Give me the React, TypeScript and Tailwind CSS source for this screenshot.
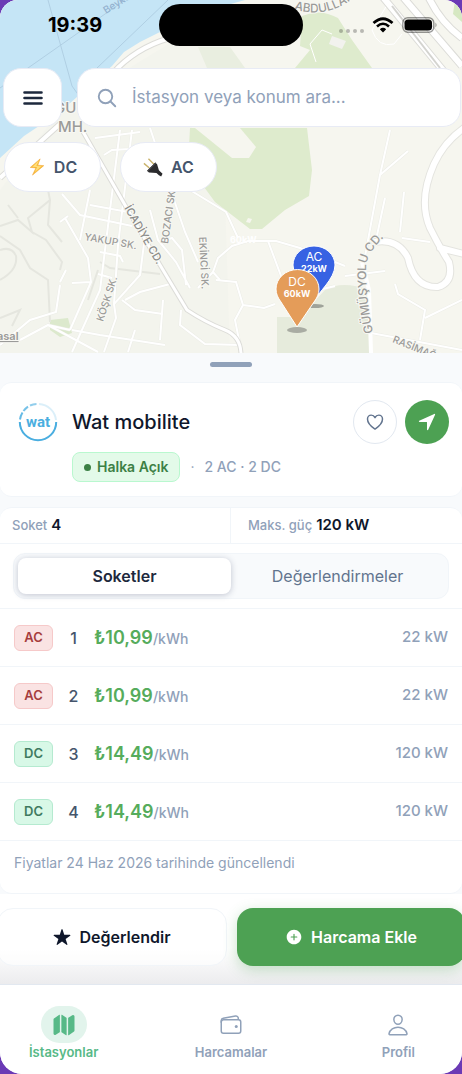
import { useState } from "react";
import type { ReactNode } from "react";
import {
  IoAddCircle,
  IoHeartOutline,
  IoMap,
  IoNavigate,
  IoPersonOutline,
  IoSearchOutline,
  IoStar,
  IoWalletOutline,
} from "react-icons/io5";

type Socket = { no: number; type: "AC" | "DC"; price: string; power: string };

const sockets: Socket[] = [
  { no: 1, type: "AC", price: "₺10,99", power: "22 kW" },
  { no: 2, type: "AC", price: "₺10,99", power: "22 kW" },
  { no: 3, type: "DC", price: "₺14,49", power: "120 kW" },
  { no: 4, type: "DC", price: "₺14,49", power: "120 kW" },
];

// small side streets, drawn as thin white lines
const streets = [
  "M62 194 L80 215 L132 226 M90 205 L128 212 M90 190 L80 240 M120 130 L100 290 L72 352",
  "M65 218 L88 258 L91 282 L70 330 M60 222 L68 216 M72 283 L91 282 M100 252 L120 256 L123 262",
  "M98 274 L112 278 M145 236 L140 275 L114 304 L116 318 L104 352 M122 300 L135 310 L163 314",
  "M132 130 L118 245 L114 304 M95 138 L140 132 M104 155 L112 150 L148 148 M172 194 L185 232 L198 262",
  "M150 210 L158 240 L176 262 L190 288 M160 242 L172 238 L182 250 L186 285 M198 288 L213 272 L220 280",
  "M213 272 L218 258 L232 246 L248 241 L276 241 L300 248 L345 266 M268 241 L290 300",
  "M216 280 L236 282 L243 305 L264 308 L275 304 M243 305 L235 320 L240 345",
  "M72 330 L100 335 L165 345 M48 325 L70 330 M20 340 L48 325 L98 352 M135 330 L128 352",
  "M60 282 L66 270 M60 285 L56 312 L30 320 L0 345 M125 300 L140 292 L170 284 M163 300 L160 340",
  "M181 310 L180 325 L205 344 L240 345 M380 175 L364 262 M390 130 L380 175 L408 151 M385 198 L376 240",
  "M404 192 L400 232 M402 238 L430 242 M395 284 L398 294 L425 310 L420 340 M425 318 L462 300",
  "M345 276 L385 271 M335 286 L310 292 M371 333 L462 350 M150 128 L172 194 M190 190 L226 212 L238 238",
];

const paths = [
  "M0 226 L18 220 L32 232 L28 218 L50 200 L48 190 M0 236 L20 250 L30 268 L48 280 L50 322",
  "M32 232 L46 240 L62 262 L60 270 M50 200 L48 225 L62 242 M8 205 L18 218 M0 280 Q18 270 16 256 Q12 246 0 250",
  "M0 318 L20 310 L12 326 M100 262 L110 268 L160 274 M98 270 L88 300",
];

function CityMap() {
  return (
    <svg
      className="absolute inset-0 h-full w-full"
      viewBox="0 0 462 353"
      preserveAspectRatio="xMidYMin slice"
      fontFamily="Inter, 'Noto Sans', sans-serif"
      aria-hidden="true"
    >
      <rect width="462" height="353" fill="#f6f6ef" />
      <path d="M60 110 L200 25 L240 60 L190 130 L225 200 L230 353 L0 353 L0 190 Z" fill="#f3f4ed" />
      <path d="M198 47 L230 47 L245 68 L207 68 Z" fill="#e9eee0" />
      <path d="M277 353 L277 317 L300 317 L325 290 Q342 280 369 290 L371 353 Z" fill="#e6ebdc" />
      <path d="M300 46 L302 16 Q320 8 338 18 L352 40 L372 68 L295 68 L310 50 Z" fill="#deebcd" />
      <path
        d="M190 128 L307 128 L312 170 L309 196 L285 210 L262 229 L250 229 L215 202 L188 165 Z"
        fill="#deebcd"
      />
      <path d="M195 128 L240 128 L256 147 L249 158 L232 158 Z" fill="#f6f6ef" />
      <path d="M50 320 L68 318 L72 333 L60 337 L50 330 Z" fill="#dce9cd" />
      <path d="M455 0 L462 0 L462 22 L453 14 Z" fill="#d6e8c2" />
      <path d="M248 218 L252 219 L250 223 L246 222 Z" fill="#f6f6ef" />
      <path d="M332 36 L346 41 L342 49 L329 44 Z" fill="#f2f2ee" />

      {/* sea and ferry lines */}
      <path
        d="M0 0 L245 0 L192 15 L168 28 L140 42 L124 52 L112 66 L60 112 L24 136 L0 158 Z"
        fill="#c5e5f6"
      />
      <g fill="none" stroke="#b0cfe3">
        <path d="M48 0 L72 86 L82 100" />
        <path d="M0 88 L28 68 L125 0" />
        <path d="M97 68 L168 0" />
      </g>

      <g fill="none" stroke="#e5e6df" strokeWidth="2">
        {paths.map((d) => (
          <path key={d} d={d} />
        ))}
      </g>
      <g fill="none" stroke="#ecede7" strokeWidth="3">
        {streets.map((d) => (
          <path key={d} d={d} />
        ))}
      </g>
      <g fill="none" stroke="#ffffff" strokeWidth="2">
        {streets.map((d) => (
          <path key={d} d={d} />
        ))}
        <path d="M316 62 L310 44 L322 30 L332 34 M390 0 L372 30 Q378 48 394 44 L402 34" strokeWidth="1" />
      </g>

      {/* main roads */}
      <g fill="none" stroke="#dcdcd8" strokeWidth="6">
        <path d="M0 178 L60 124 M112 74 Q135 48 170 38" />
        <path d="M82 130 L125 205 L160 265 L187 310 Q205 322 225 330 Q240 336 241 353" strokeWidth="5" />
        <path d="M382 -4 L446 74 M402 -4 L462 66 M428 -4 Q440 22 462 38" strokeWidth="8" />
      </g>
      <g fill="none" stroke="#ffffff" strokeWidth="4">
        <path d="M0 178 L60 124 M112 74 Q135 48 170 38" />
        <path d="M82 130 L125 205 L160 265 L187 310 Q205 322 225 330 Q240 336 241 353" strokeWidth="3" />
        <path d="M382 -4 L446 74 M402 -4 L462 66 M428 -4 Q440 22 462 38" strokeWidth="6" />
        <path d="M371 353 L369 290 L362 262" />
      </g>
      <path d="M392 6 L440 68" stroke="#d4d4d0" strokeWidth="2" />
      <g fill="none" strokeLinecap="round">
        <path
          d="M375 242 Q398 238 408 258 Q414 288 438 287 Q454 282 449 262 Q440 248 430 228 Q418 200 434 164 Q444 142 464 128 M440 248 L464 254"
          stroke="#e4e4df"
          strokeWidth="8"
        />
        <path
          d="M375 242 Q398 238 408 258 Q414 288 438 287 Q454 282 449 262 Q440 248 430 228 Q418 200 434 164 Q444 142 464 128 M440 248 L464 254"
          stroke="#ffffff"
          strokeWidth="6"
        />
      </g>

      <g fill="#9b9b99" stroke="#f8f8f3" strokeWidth="2" paintOrder="stroke" fontSize="10" fontWeight="500">
        <text transform="translate(106 14) rotate(-32)" fill="#93b1cf" stroke="none">Beykoz</text>
        <path id="abdullah" d="M294 9 Q334 22 366 -14" fill="none" stroke="none" />
        <text fontSize="12">
          <textPath href="#abdullah">ABDULLAH</textPath>
        </text>
        <text x="54" y="113" fontSize="15">GU</text>
        <text x="58" y="132" fontSize="15">MH.</text>
        <text transform="translate(124 208) rotate(60)" fontSize="11" fill="#8b8b89">İCADİYE CD.</text>
        <text transform="translate(84 240) rotate(10)">YAKUP SK.</text>
        <text transform="translate(168 244) rotate(-82)">BOZACI SK.</text>
        <text transform="translate(199 237) rotate(87)">EKİNCİ SK.</text>
        <text transform="translate(103 322) rotate(-72)">KÖŞK SK.</text>
        <path id="gumusyolu" d="M373 333 Q366 298 366 268 Q366 252 390 232" fill="none" stroke="none" />
        <text fontSize="12">
          <textPath href="#gumusyolu">GÜMÜŞYOLU CD.</textPath>
        </text>
        <text transform="translate(392 342) rotate(22)">RASİMAĞA</text>
        <text x="-3" y="340" fontSize="11" fontWeight="600" textDecoration="underline">asal</text>
        <text x="230" y="243" fill="#ffffff" stroke="none" fontSize="9" fontWeight="700">60kW</text>
      </g>

      {/* station pins */}
      <g fill="#ffffff" textAnchor="middle">
        <ellipse cx="315" cy="306" rx="9" ry="2" fill="#9fa39a" />
        <path
          d="M314 302 C310 292 293 279 293 265 A21 19 0 0 1 335 265 C335 279 318 292 314 302 Z"
          fill="#3762e3"
          stroke="#ffffff"
        />
        <text x="314" y="261" fontSize="12">AC</text>
        <text x="314" y="272" fontSize="9" fontWeight="700">22kW</text>
        <ellipse cx="297" cy="330" rx="10" ry="3" fill="#a9aca3" />
        <path
          d="M297 327 L281 302 C278 298 276 294 276 289 A21 19 0 0 1 319 289 C319 294 317 298 314 302 Z"
          fill="#e49c59"
          stroke="#ffffff"
        />
        <text x="297" y="286" fontSize="12">DC</text>
        <text x="297" y="297" fontSize="9" fontWeight="700">60kW</text>
      </g>
    </svg>
  );
}

function StatusBar() {
  return (
    <div className="relative flex h-[42px] items-center justify-between pl-12 pr-6">
      <span className="text-[20px] font-bold text-black">19:39</span>
      <div className="absolute left-1/2 top-0 h-[42px] w-36 -translate-x-1/2 rounded-full bg-black" />
      <div className="flex items-center gap-2">
        <div className="flex gap-[3px] pt-3">
          {[0, 1, 2, 3].map((dot) => (
            <span key={dot} className="size-1 rounded-full bg-black/25" />
          ))}
        </div>
        <svg className="h-4 w-[22px]" viewBox="0 0 22 16" aria-hidden="true">
          <path d="M1.5 6 Q11 -2.500 20.500 6" fill="none" stroke="#000" strokeWidth="2.8" />
          <path d="M5 9.500 Q11 4 17 9.500" fill="none" stroke="#000" strokeWidth="2.6" />
          <path d="M7.800 12.300 Q11 9.400 14.200 12.300 L11 15.600 Z" fill="#000" />
        </svg>
        <svg className="h-4 w-9" viewBox="0 0 36 16" aria-hidden="true">
          <rect x="0.800" y="0.800" width="31" height="14.400" rx="5" fill="none" stroke="#000" strokeOpacity="0.4" strokeWidth="1.400" />
          <rect x="2.500" y="2.500" width="27.500" height="11" rx="3.500" fill="#000" />
          <path d="M33.500 5.500 Q35.500 8 33.500 10.500 Z" fill="#000" opacity="0.45" />
        </svg>
      </div>
    </div>
  );
}

function MenuIcon() {
  return (
    <svg className="size-5" viewBox="0 0 20 20" aria-hidden="true">
      <path d="M1.500 4.500 H18.500 M1.500 10 H18.500 M1.500 15.500 H18.500" stroke="currentColor" strokeWidth="2.600" strokeLinecap="round" />
    </svg>
  );
}

function BoltIcon() {
  return (
    <svg className="size-[18px]" viewBox="0 0 20 20" aria-hidden="true">
      <path d="M13.500 1 L2.500 10.500 L8.800 11 L5 19 L17.500 8.500 L10.800 8 Z" fill="#fbbf3a" stroke="#f0a22e" strokeWidth="0.6" />
      <path d="M12 3 L5 9.600 L10.200 10 L7.600 15.500 L14.800 9.300 L9.200 9 Z" fill="#ffdf7c" />
    </svg>
  );
}

function PlugIcon() {
  return (
    <svg className="size-5" viewBox="0 0 22 22" aria-hidden="true">
      <path d="M1 7 L7 12 M6 2 L12 8" stroke="#c9b26a" strokeWidth="1.500" />
      <path d="M4.500 15 L13.500 6 L15.500 8 L17.500 14.500 L21.500 18.500 L20 21.500 L17.500 20 L14.800 17.500 L6.500 17 Z" fill="#2b2b2d" />
      <path d="M13.500 6 L4.500 15 L5.500 16 L14.500 7 Z" fill="#4a4a4d" />
    </svg>
  );
}

function WatLogo() {
  return (
    <svg className="size-10" viewBox="0 0 40 40" role="img" aria-label="wat">
      <g fill="none" stroke="#4aaee0" strokeWidth="2">
        <path d="M1.800 20 A18.200 18.200 0 0 0 38.200 20" />
        <path d="M2 17.500 A18 18 0 0 1 4.500 10.500" opacity="0.85" />
        <path d="M5.500 9 A18 18 0 0 1 10 4.600" opacity="0.75" />
        <path d="M12 3.500 A18 18 0 0 1 18.500 2" opacity="0.6" />
        <path d="M21 2 A18 18 0 0 1 38 18" opacity="0.2" />
      </g>
      <text
        x="20"
        y="25"
        textAnchor="middle"
        fontFamily="Roboto, sans-serif"
        fontSize="15"
        fontWeight="700"
        fill="#4aaee0"
      >
        wat
      </text>
    </svg>
  );
}

function FilterChip({ icon, label }: { icon: ReactNode; label: string }) {
  return (
    <button className="flex h-[50px] w-[97px] cursor-pointer items-center justify-center gap-2 rounded-full border border-[#e8ebf5] bg-white text-base font-semibold text-slate-600">
      {icon}
      {label}
    </button>
  );
}

function SocketRow({ socket }: { socket: Socket }) {
  const badge =
    socket.type === "AC"
      ? "border-[#f6c9c9] bg-[#fae3e3] text-[#a63d3d]"
      : "border-[#b5ead0] bg-[#d8f8e7] text-[#3f7a60]";

  return (
    <li className="flex h-[58px] items-center border-b border-slate-100 px-3.5">
      <span className={`flex h-[26px] w-[39px] items-center justify-center rounded-md border text-[13px] font-semibold ${badge}`}>
        {socket.type}
      </span>
      <span className="w-[41px] text-center text-base font-medium text-slate-600">{socket.no}</span>
      <span className="text-[18px] font-semibold text-[#56ac5c]">
        {socket.price}
        <span className="text-sm font-medium text-slate-400">/kWh</span>
      </span>
      <span className="ml-auto text-[15px] font-medium text-slate-400">{socket.power}</span>
    </li>
  );
}

const navItems = [
  { name: "İstasyonlar", icon: IoMap },
  { name: "Harcamalar", icon: IoWalletOutline },
  { name: "Profil", icon: IoPersonOutline },
];

export default function App() {
  const [tab, setTab] = useState("Soketler");
  const [page, setPage] = useState("İstasyonlar");

  return (
    <div className="min-h-screen bg-[#6b3ab5] font-['Inter','Liberation_Sans',sans-serif]">
      <div className="flex min-h-screen flex-col overflow-hidden rounded-t-[18px] rounded-b-[22px] bg-slate-50">
        <header className="relative pb-[161px] pt-1">
          <CityMap />
          <StatusBar />
          <div className="relative mt-[22px] flex gap-[15px] pl-[3px] pr-px">
            <button
              className="flex size-[59px] shrink-0 cursor-pointer items-center justify-center rounded-[18px] border border-[#e8ebf5] bg-white text-slate-800"
              aria-label="Menü"
            >
              <MenuIcon />
            </button>
            <label className="flex h-[59px] min-w-0 flex-1 items-center gap-3.5 rounded-[18px] border border-[#e8ebf5] bg-white pl-[18px]">
              <IoSearchOutline className="size-[22px] shrink-0 text-slate-400 [&_path]:[stroke-width:44px]" />
              <input
                type="text"
                aria-label="İstasyon ara"
                placeholder="İstasyon veya konum ara..."
                className="w-full min-w-0 bg-transparent text-[17px] text-slate-800 outline-none placeholder:text-slate-400"
              />
            </label>
          </div>
          <div className="relative mt-[15px] flex gap-[19px] pl-1">
            <FilterChip icon={<BoltIcon />} label="DC" />
            <FilterChip icon={<PlugIcon />} label="AC" />
          </div>
        </header>

        <main>
          <div className="flex h-[29px] justify-center pt-[9px]">
            <div className="h-[5px] w-[42px] rounded-full bg-slate-400" />
          </div>

          <section className="flex gap-3.5 rounded-xl border-y border-slate-100 bg-white pb-3.5 pl-[18px] pr-[13px] pt-[17px]">
            <div className="pt-0.5">
              <WatLogo />
            </div>
            <div className="flex-1">
              <div className="flex items-center gap-2">
                <h1 className="flex-1 text-[20px] font-medium text-slate-900">Wat mobilite</h1>
                <button
                  className="flex size-11 cursor-pointer items-center justify-center rounded-full border border-slate-200 text-slate-500"
                  aria-label="Favorilere ekle"
                >
                  <IoHeartOutline className="size-5 [&_path]:[stroke-width:38px]" />
                </button>
                <button
                  className="flex size-11 cursor-pointer items-center justify-center rounded-full bg-[#4da153] text-white"
                  aria-label="Yol tarifi"
                >
                  <IoNavigate className="size-5" />
                </button>
              </div>
              <div className="mt-2 flex items-center gap-2.5 text-sm">
                <span className="flex h-[30px] items-center gap-1.5 rounded-lg border border-green-200 bg-[#e3fae9] px-[11px] font-semibold text-[#3c8045]">
                  <span className="size-[7px] rounded-full bg-[#3c8045]" />
                  Halka Açık
                </span>
                <span className="text-slate-400">·</span>
                <span className="font-medium text-slate-400">2 AC · 2 DC</span>
              </div>
            </div>
          </section>

          <section className="mt-2.5 rounded-xl border-y border-slate-100 bg-white">
            <div className="grid grid-cols-2 border-b border-slate-100 text-[15px] font-semibold text-slate-900">
              <p className="flex h-[35px] items-center gap-1 border-r border-slate-100 pl-3">
                <span className="text-[13px] font-medium text-slate-400">Soket</span>4
              </p>
              <p className="flex h-[35px] items-center gap-1 pl-[17px]">
                <span className="text-[13px] font-medium text-slate-400">Maks. güç</span>120 kW
              </p>
            </div>

            <div className="border-b border-slate-100 px-[13px] py-[9px]">
              <div role="tablist" className="grid grid-cols-2 rounded-xl border border-slate-100 bg-slate-50 p-1">
                {["Soketler", "Değerlendirmeler"].map((name) => (
                  <button
                    key={name}
                    role="tab"
                    aria-selected={tab === name}
                    onClick={() => setTab(name)}
                    className={`h-9 cursor-pointer rounded-lg text-base ${tab === name
                      ? "bg-white font-semibold text-slate-800 shadow-[0_1px_6px_rgba(30,41,80,0.25)]"
                      : "text-slate-500"
                      }`}
                  >
                    {name}
                  </button>
                ))}
              </div>
            </div>

            <ul>
              {sockets.map((socket) => (
                <SocketRow key={socket.no} socket={socket} />
              ))}
            </ul>
            <p className="px-3.5 pb-5 pt-3 text-sm text-slate-400">Fiyatlar 24 Haz 2026 tarihinde güncellendi</p>
          </section>
        </main>

        {/* action bar, runs off the right side of the screen */}
        <div className="-mx-[3px] flex gap-2.5 bg-linear-to-b from-white from-60% to-[#ececee] pb-[18px] pt-3.5">
          <button className="flex h-[58px] flex-1 cursor-pointer items-center justify-center gap-2 rounded-2xl border border-slate-100 bg-white/60 text-base font-semibold text-slate-900">
            <IoStar className="size-[18px]" />
            Değerlendir
          </button>
          <button className="flex h-[58px] flex-1 cursor-pointer items-center justify-center gap-2 rounded-2xl bg-[#4da153] text-base font-semibold text-white shadow-[0_4px_14px_rgba(77,161,83,0.3)]">
            <IoAddCircle className="size-[18px]" />
            Harcama Ekle
          </button>
        </div>

        <nav className="relative -mx-5 grid flex-1 grid-cols-3 items-start border-t border-slate-200 bg-white pt-[21px]">
          {navItems.map(({ name, icon: Icon }) => {
            const isActive = page === name;
            return (
              <button
                key={name}
                onClick={() => setPage(name)}
                className={`flex cursor-pointer flex-col items-center text-[13px] font-semibold ${isActive ? "text-[#57b987]" : "text-slate-400"
                  }`}
              >
                <span className={`flex h-[37px] w-[46px] items-center justify-center rounded-full ${isActive ? "bg-[#e2f4ec]" : ""}`}>
                  <Icon className="size-6" />
                </span>
                {name}
              </button>
            );
          })}
        </nav>
      </div>
    </div>
  );
}
